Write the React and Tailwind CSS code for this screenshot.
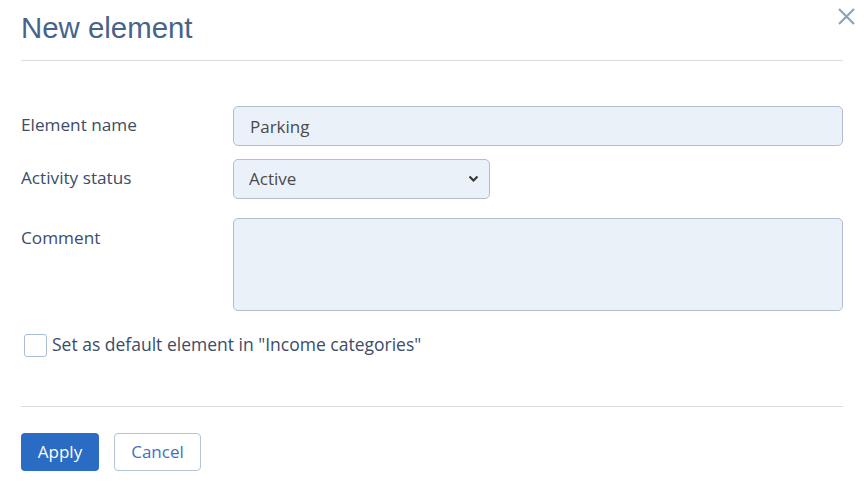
export default function App() {
  return (
    <div className="w-[868px] h-[489px] bg-white relative" style={{ fontFamily: '"Open Sans", sans-serif' }}>
      {/* Close */}
      <button className="absolute right-[12px] top-[7px] text-[#8aa3bf]">
        <svg width="19" height="19" viewBox="0 0 19 19" fill="none" stroke="currentColor" strokeWidth="2.2">
          <path d="M2 2 L17 17 M17 2 L2 17" />
        </svg>
      </button>

      <div className="px-[21px] pr-[25px]">
        {/* Header */}
        <div className="h-[61px] border-b border-[#dcdcdc] flex items-center pb-[4px]">
          <h2 className="text-[29.4px] text-[#46648a]" style={{ fontFamily: '"Liberation Sans", Arial, sans-serif' }}>
            New element
          </h2>
        </div>

        {/* Form */}
        <div className="pt-[45px] flex flex-col">
          <div className="flex items-center h-[40px]">
            <label className="w-[212px] text-[17.2px] text-[#3c4c68] -mt-[3px]">Element name</label>
            <input
              defaultValue="Parking"
              className="flex-1 h-[40px] rounded-[5px] border border-[#b0bed0] bg-[#ebf1f9] px-[16px] text-[17px] text-[#4a4a4a] outline-none"
            />
          </div>
          <div className="flex items-center h-[40px] mt-[13px]">
            <label className="w-[212px] text-[17.2px] text-[#3c4c68] -mt-[3px]">Activity status</label>
            <div className="relative w-[257px] h-[40px]">
              <select className="appearance-none w-full h-full rounded-[5px] border border-[#b0bed0] bg-[#ebf1f9] px-[15px] text-[17px] text-[#4a4a4a] outline-none">
                <option>Active</option>
              </select>
              <svg className="absolute right-[11px] top-[16px] pointer-events-none" width="11" height="8" viewBox="0 0 11 8" fill="none" stroke="#333" strokeWidth="2">
                <path d="M1.5 1.5 L5.5 5.5 L9.5 1.5" />
              </svg>
            </div>
          </div>
          <div className="flex items-start mt-[19px]">
            <label className="w-[212px] text-[17.2px] text-[#3c4c68] pt-[7px]">Comment</label>
            <textarea className="flex-1 h-[93px] rounded-[5px] border border-[#b0bed0] bg-[#ebf1f9] resize-none outline-none" />
          </div>
          <label className="flex items-center mt-[22px] ml-[3px] h-[24px]">
            <span className="w-[23px] h-[23px] rounded-[3px] border border-[#a9bdd6] bg-white" />
            <span className="ml-[5px] text-[17.5px] text-[#3c4c68] -mt-[2px]">Set as default element in "Income categories"</span>
          </label>
        </div>

        {/* Footer */}
        <div className="mt-[49px] border-t border-[#dcdcdc] pt-[26px] flex gap-[15px]">
          <button className="h-[38px] w-[78px] rounded-[4px] bg-[#2a6bc4] text-white text-[17px]">Apply</button>
          <button className="h-[38px] w-[87px] rounded-[4px] border border-[#b3c3d8] bg-white text-[#3d72c2] text-[17px]">Cancel</button>
        </div>
      </div>
    </div>
  );
}
